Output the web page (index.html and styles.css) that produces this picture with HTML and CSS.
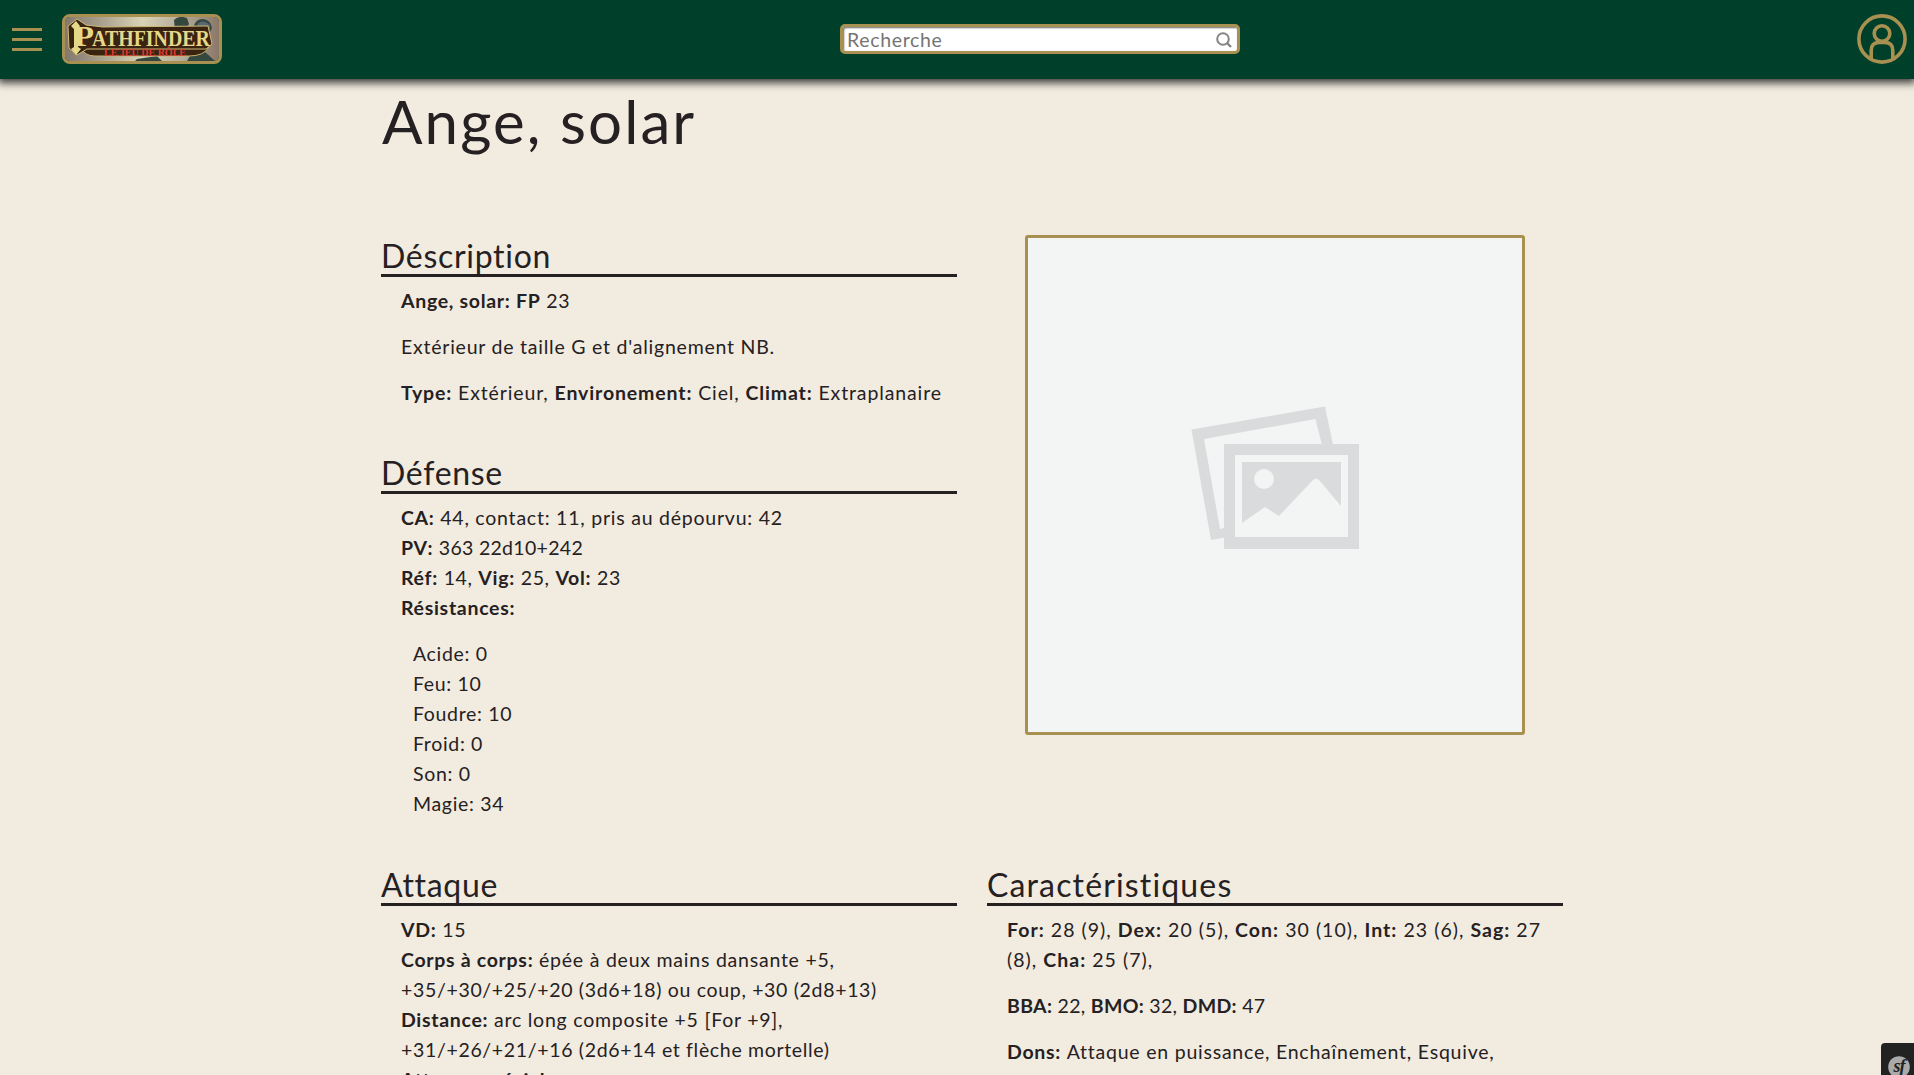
FILE: index.html
```
<!DOCTYPE html>
<html lang="fr">
<head>
<meta charset="utf-8">
<title>Ange, solar</title>
<link rel="stylesheet" href="styles.css">
</head>
<body>
<header class="topbar">
  <div class="left">
    <button class="burger" aria-label="Menu"><span></span><span></span><span></span></button>
    <a class="logo" href="#">
      <svg width="154" height="44" viewBox="0 0 154 44">
        <defs>
          <linearGradient id="sky" x1="0" x2="1"><stop offset="0" stop-color="#84786c"/><stop offset=".2" stop-color="#a39a8a"/><stop offset=".5" stop-color="#d9d2b6"/><stop offset=".75" stop-color="#b5ad9b"/><stop offset="1" stop-color="#8b7769"/></linearGradient>
        </defs>
        <rect width="154" height="44" fill="url(#sky)"/>
        <path d="M109 3q5-5 13-2l2 6-4 7h-10zM129 10q1-8 9-8 8 1 9 9l-4 8-14-3z" fill="#35483f"/>
        <path d="M132 8q5-7 13 0v8h-13z" fill="#5c6770"/>
        <path d="M126 37l14-2 10 9h-28zM72 42l20-3 5 5H70z" fill="#35483f"/>
        <path d="M16 30q3 9 14 9h94q15 0 20-9z" fill="#3b2312" stroke="#c7b36c"/>
        <path d="M3 9l9-7 9 6 17 2 105-1 4 18-6 5H22l-10 6-8-7z" fill="#3b2312" stroke="#cdbb77"/>
        <path d="M11 4l4 5-2 3v18l3 2-5 6-5-6 3-2V12l-3-3z" fill="#e6d889"/>
        <text class="mark" x="9" y="29" font-size="29" textLength="20" lengthAdjust="spacingAndGlyphs">P</text>
        <text class="mark" x="27" y="29" font-size="23" textLength="118" lengthAdjust="spacingAndGlyphs">ATHFINDER</text>
        <text class="submark" x="39" y="39" font-size="10" textLength="82" lengthAdjust="spacingAndGlyphs">LE JEU DE RÔLE</text>
      </svg>
    </a>
  </div>
  <label class="search">
    <input type="text" placeholder="Recherche">
    <svg width="16" height="16" viewBox="0 0 16 16" fill="none" stroke="#858585" stroke-width="2"><circle cx="7" cy="7" r="5.8"/><path d="M11 11l4 4" stroke-width="2.4"/></svg>
  </label>
  <a class="account" href="#" aria-label="Compte">
    <svg width="50" height="50" viewBox="0 0 50 50" fill="none" stroke="#a89050" stroke-width="3.6"><circle cx="25" cy="25" r="23.1"/><circle cx="25" cy="19.5" r="7.8"/><path d="M14.2 45V36.500q0-8 8-8h5.600q8 0 8 8V45"/></svg>
  </a>
</header>
<main>
  <h1>Ange, solar</h1>
  <div class="grid">
    <div>
      <section>
        <h2>Déscription</h2>
        <div class="body">
          <p><b>Ange, solar: FP</b> 23</p>
          <p class="loose">Extérieur de taille G et d'alignement NB.</p>
          <p class="looser"><b>Type:</b> Extérieur, <b>Environement:</b> Ciel, <b>Climat:</b> Extraplanaire</p>
        </div>
      </section>
      <section>
        <h2>Défense</h2>
        <div class="body">
          <p><b>CA:</b> <span class="loose">44, contact: 11, pris au dépourvu: 42</span><br><b>PV:</b> <span class="tight">363 22d10+242</span><br><b>Réf:</b> 14, <b>Vig:</b> 25, <b>Vol:</b> 23<br><b>Résistances:</b></p>
          <ul>
            <li>Acide: 0</li><li>Feu: 10</li><li>Foudre: 10</li><li>Froid: 0</li><li>Son: 0</li><li>Magie: 34</li>
          </ul>
        </div>
      </section>
    </div>
    <div class="picture">
      <svg width="170" height="144" viewBox="0 0 170 144">
        <path d="M3.500 22.500L137 -.5 145 38H134L127.500 12 16 32 32 122l8-2v10l-17 3z" fill="#d9dbdc"/>
        <path fill-rule="evenodd" d="M36 37h135v105H36zM47 48v82h113V48z" fill="#d9dbdc"/>
        <path d="M54 55h99v44l-22-26q-4-3-6 0L91 109 77 100 54 116z" fill="#d9dbdc"/>
        <circle cx="76" cy="72" r="10" fill="#f3f5f4"/>
      </svg>
    </div>
    <section>
      <h2>Attaque</h2>
      <div class="body">
        <p><b>VD:</b> 15<br><b>Corps à corps:</b> <span class="loose">épée à deux mains dansante +5,</span><br>+35/+30/+25/+20 (3d6+18) ou coup, +30 (2d8+13)<br><b>Distance:</b> <span class="loose">arc long composite +5 [For +9],</span><br>+31/+26/+21/+16 (2d6+14 et flèche mortelle)<br><b>Attaque spéciale:</b></p>
      </div>
    </section>
    <section>
      <h2 class="wide">Caractéristiques</h2>
      <div class="body">
        <p class="stats"><b>For:</b> 28 (9), <b>Dex:</b> 20 (5), <b>Con:</b> 30 (10), <b>Int:</b> 23 (6), <b>Sag:</b> 27<br>(8), <b>Cha:</b> 25 (7),</p>
        <p class="tight"><b>BBA:</b> 22, <b>BMO:</b> 32, <b>DMD:</b> 47</p>
        <p><b>Dons:</b> <span class="loose">Attaque en puissance, Enchaînement, Esquive,</span><br>Réflexes surhumains, Science de la destruction,</p>
      </div>
    </section>
  </div>
</main>
<div class="devbar">
  <svg width="33" height="32" viewBox="0 0 33 32"><circle cx="18" cy="24" r="10.800" fill="#aaa"/><text x="18" y="29" text-anchor="middle" class="sf">sf</text></svg>
</div>
</body>
</html>
```
FILE: styles.css
```
* { box-sizing: border-box; }
body {
  margin: 0;
  height: 1075px;
  overflow: hidden;
  background: #f2ebe0;
  color: #252122;
  font: 19.5px/30px Lato, "Noto Sans", sans-serif;
  letter-spacing: .67px;
}
.topbar {
  position: relative;
  display: grid;
  grid-template-columns: 828px 400px 1fr;
  align-items: center;
  height: 79px;
  padding: 0 7px 1px 12px;
  background: #00402a;
  box-shadow: 0 2px 8px 2px rgba(0, 0, 0, .75);
}
.left { display: flex; align-items: center; gap: 20px; }
.burger {
  display: flex;
  flex-direction: column;
  gap: 7px;
  width: 30px;
  padding: 0;
  border: 0;
  background: none;
}
.burger span { height: 3px; background: #a89050; }
.logo {
  display: block;
  width: 160px;
  height: 50px;
  overflow: hidden;
  border: 3px solid #a89050;
  border-radius: 8px;
}
.logo svg, .account svg { display: block; }
.mark { font-family: "Liberation Serif", serif; font-weight: 700; letter-spacing: 0; fill: #e6d889; }
.submark { font-family: "Liberation Serif", serif; font-weight: 700; letter-spacing: 0; fill: #e03a34; }
.search {
  display: flex;
  align-items: center;
  width: 400px;
  height: 30px;
  padding: 2px 5px 0 4px;
  border: 3px solid #a89050;
  border-radius: 5px;
  background: #fff;
  box-shadow: inset 1px 1px 2px #666;
}
.search input {
  flex: 1;
  min-width: 0;
  height: 22px;
  padding: 0;
  border: 0;
  outline: 0;
  background: none;
  font: inherit;
  letter-spacing: .67px;
}
.search input::placeholder { color: #757575; }
.account { justify-self: end; }
main { width: 1182px; margin-left: 381px; }
h1 {
  margin: 0;
  height: 151px;
  padding: 6px 0 0 1px;
  font-size: 60px;
  line-height: 72px;
  font-weight: 400;
  letter-spacing: 2.1px;
}
h2 {
  margin: 0 0 9px;
  height: 42px;
  padding-top: 1px;
  border-bottom: 3px solid #252122;
  font-size: 32px;
  line-height: 40px;
  font-weight: 400;
  letter-spacing: .7px;
}
.wide { letter-spacing: 1.15px; }
.loose { letter-spacing: .77px; }
.looser, .looser b { letter-spacing: .87px; }
.stats, .stats b { letter-spacing: 1.03px; }
.tight, .tight b { letter-spacing: .3px; }
b { letter-spacing: .7px; }
.grid { display: grid; grid-template-columns: 576px 576px; column-gap: 30px; padding-top: 5px; }
section { height: 217px; }
section + section { height: 412px; }
.grid > section { height: 211px; overflow: hidden; }
.body { padding: 0 20px; white-space: nowrap; }
p { margin: 0 0 16px; }
ul { margin: 0; padding: 0 0 0 12px; list-style: none; }
.picture {
  display: flex;
  align-items: center;
  justify-content: center;
  justify-self: center;
  width: 500px;
  height: 500px;
  padding: 0 4px 12px 0;
  border: 3px solid #a89050;
  border-radius: 3px;
  background: #f3f5f4;
}
.picture svg { overflow: visible; }
.devbar {
  position: fixed;
  right: 0;
  bottom: 0;
  width: 33px;
  height: 32px;
  border-top-left-radius: 4px;
  background: #222;
}
.devbar svg { display: block; }
.sf { font: italic 700 18px "Liberation Serif", serif; letter-spacing: -1px; fill: #222; }
```
